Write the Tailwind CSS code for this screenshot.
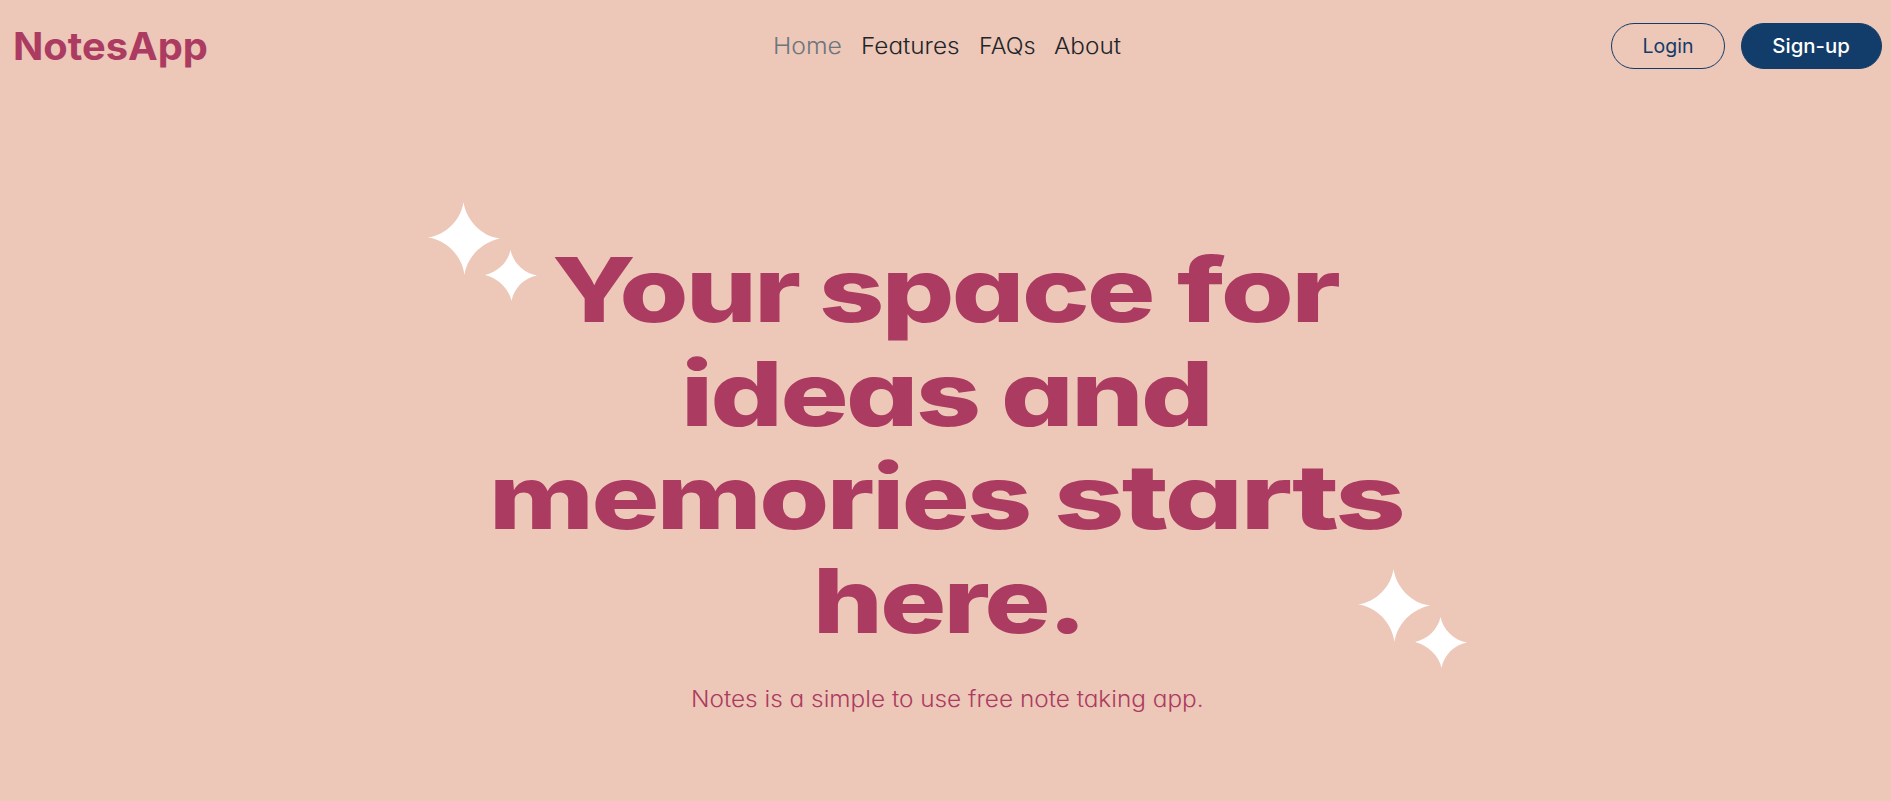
<!DOCTYPE html>
<html lang="en">
<head>
<meta charset="utf-8">
<title>NotesApp</title>
<script src="https://cdn.jsdelivr.net/npm/@tailwindcss/browser@4"></script>
</head>
<body class="relative h-[801px] overflow-hidden bg-[#edc7b7] font-['Inter','Open_Sans',sans-serif] [font-feature-settings:'cv11'] whitespace-nowrap">
  <header class="grid h-[92px] grid-cols-[774px_1fr_280px] items-center">
    <a class="ml-[12.5px] w-[194px] text-[38px] leading-[44px] font-bold text-[#ac3b61]"><span class="inline-block origin-left scale-x-[1.048]">NotesApp</span></a>
    <nav class="flex text-[22.5px] leading-[30px] font-light text-[#212529]">
      <a class="w-[87.5px] -ml-[1px] text-[#6c757d]"><span class="inline-block origin-left scale-x-[1.1]">Home</span></a>
      <a class="w-[118px]"><span class="inline-block origin-left scale-x-[1.08]">Features</span></a>
      <a class="w-[75px]"><span class="inline-block origin-left scale-x-[1.04]">FAQs</span></a>
      <a><span class="inline-block origin-left scale-x-[1.08]">About</span></a>
    </nav>
    <div class="flex gap-4 text-[19.5px] leading-[42px]">
      <button class="h-[46px] w-[114px] rounded-full border border-[#123c69] pb-[1px] text-[#123c69]">Login</button>
      <button class="h-[46px] w-[141px] rounded-full border border-[#123c69] bg-[#123c69] pb-[1px] font-medium text-white"><span class="inline-block scale-x-[1.045]">Sign-up</span></button>
    </div>
  </header>

  <main class="pt-[146px]">
    <h1 class="ml-[486px] text-[89.4px] leading-[103.68px] font-extrabold tracking-[-2px] text-[#ac3b61]">
      <span class="flex h-[103.68px] pl-[66px]">
        <span class="w-[266.5px]"><span class="inline-block origin-left scale-x-[1.246]">Your</span></span>
        <span class="w-[358.5px]"><span class="inline-block origin-left scale-x-[1.274]">space</span></span>
        <span><span class="inline-block origin-left scale-x-[1.322]">for</span></span>
      </span>
      <span class="flex h-[103.68px] pl-[195px]">
        <span class="w-[319.500px]"><span class="inline-block origin-left scale-x-[1.27]">ideas</span></span>
        <span><span class="inline-block origin-left scale-x-[1.275]">and</span></span>
      </span>
      <span class="flex h-[103.68px] pl-[3px]">
        <span class="w-[564.500px]"><span class="inline-block origin-left scale-x-[1.266]">memories</span></span>
        <span><span class="inline-block origin-left scale-x-[1.376]">starts</span></span>
      </span>
      <span class="flex h-[103.68px] pl-[327px]">
        <span><span class="inline-block origin-left scale-x-[1.229]">here.</span></span>
      </span>
    </h1>
    <p class="mt-[31.500px] ml-[691px] text-[22.5px] leading-[30px] font-light text-[#ac3b61]"><span class="inline-block origin-left scale-x-[1.082]">Notes is a simple to use free note taking app.</span></p>
  </main>

  <svg class="absolute top-[202px] left-[428px]" width="110" height="100" viewBox="0 0 110 100" fill="#fff"><path d="M35.5 0C38 17 52 34 72 36.5C54 40 39 55 36.5 73C34 54 19 38 0 35.500C18 33 33 18 35.500 0Z"/><path d="M82.500 48C85 60 95 71 109 73.500C96 76 86 86 83.500 99C81 87 70 76 57 73C70 70 80 60 82.500 48Z"/></svg>
  <svg class="absolute top-[569px] left-[1358px]" width="110" height="100" viewBox="0 0 110 100" fill="#fff"><path d="M35.5 0C38 17 52 34 72 36.5C54 40 39 55 36.5 73C34 54 19 38 0 35.500C18 33 33 18 35.500 0Z"/><path d="M82.500 48C85 60 95 71 109 73.500C96 76 86 86 83.500 99C81 87 70 76 57 73C70 70 80 60 82.500 48Z"/></svg>
</body>
</html>
